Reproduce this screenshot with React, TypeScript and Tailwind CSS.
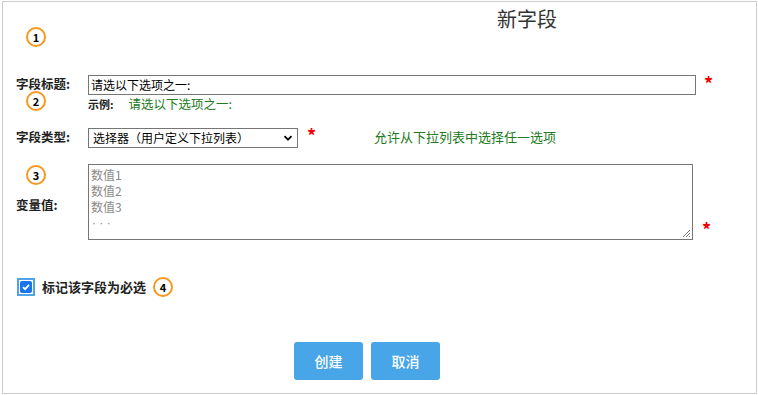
const font = { fontFamily: '"Noto Sans CJK SC", "Liberation Sans", sans-serif' }

const Badge = ({ n }: { n: number }) => (
  <span className="flex h-[20px] w-[20px] shrink-0 items-center justify-center rounded-full border-[2.5px] border-[#f7971f] bg-white text-[11px] font-bold leading-none text-black">
    {n}
  </span>
)

const Star = ({ className = "" }: { className?: string }) => (
  <span className={`block h-[12px] w-[9px] text-[18px] font-bold leading-[15px] text-[#f20000] ${className}`}>*</span>
)

export default function App() {
  return (
    <div className="bg-white w-[758px] h-[395px] pt-[1px] pl-[2px] leading-[16px]" style={font}>
      <div className="w-[755px] h-[393px] border border-[#cccccc] pl-[13px]">
        {/* header: badge 1 + title */}
        <div className="flex h-[45px] items-start">
          <div className="ml-[10px] mt-[25px]">
            <Badge n={1} />
          </div>
          <h1 className="ml-[451px] mt-[5px] text-[20px] font-normal leading-[24px] text-[#333333]">新字段</h1>
        </div>

        {/* field title */}
        <div className="mt-[28px] flex items-start">
          <div className="w-[72px]">
            <div className="mt-[1px] h-[15px] text-[12.5px] font-bold leading-[16px] text-[#222]">字段标题:</div>
            <div className="ml-[10px]">
              <Badge n={2} />
            </div>
          </div>
          <div>
            <div className="flex items-start">
              <div className="flex h-[20px] w-[608px] items-center border border-[#767676] px-[2px] text-[12px] leading-[16px] text-black">
                请选以下选项之一:
              </div>
              <Star className="ml-[8px] mt-[1px]" />
            </div>
            <div className="mt-[2px] flex items-center">
              <span className="text-[11px] font-bold leading-[14px] text-[#222]">示例:</span>
              <span className="ml-[15px] text-[12.5px] leading-[14px] text-[#217a21]">请选以下选项之一:</span>
            </div>
          </div>
        </div>

        {/* field type */}
        <div className="mt-[17px] flex items-start">
          <div className="w-[72px] text-[12.5px] font-bold leading-[18px] text-[#222]">字段类型:</div>
          <div className="flex h-[20px] w-[210px] items-center justify-between border border-[#767676] pl-[4px] pr-[4px] text-[12px] leading-[16px] text-black">
            <span>选择器（用户定义下拉列表）</span>
            <svg width="10" height="10" viewBox="0 0 10 10" fill="none">
              <path d="M1.5 3.2 5 6.7 8.5 3.2" stroke="#000" strokeWidth="1.8" />
            </svg>
          </div>
          <Star className="ml-[9px] mt-[0px]" />
          <span className="ml-[58px] text-[13px] leading-[18px] text-[#217a21]">允许从下拉列表中选择任一选项</span>
        </div>

        {/* values */}
        <div className="mt-[16px] flex items-end">
          <div className="w-[72px] self-start">
            <div className="ml-[10px] mt-[1px]">
              <Badge n={3} />
            </div>
            <div className="mt-[12px] text-[12.5px] font-bold leading-[16px] text-[#222]">变量值:</div>
          </div>
          <div className="relative h-[76px] w-[605px] border border-[#767676] px-[2px] pt-[2px] text-[12px] leading-[16px] text-[#8a8a8a]">
            <div>数值1</div>
            <div>数值2</div>
            <div>数值3</div>
            <div className="pl-[1px] text-[12px]" style={{ fontFamily: '"Liberation Sans", sans-serif' }}>· · ·</div>
            <svg className="absolute bottom-[1px] right-[1px]" width="9" height="9" viewBox="0 0 9 9">
              <path d="M8 1 1 8M8 4 4 8M8 7 7 8" stroke="#777" strokeWidth="1" />
            </svg>
          </div>
          <Star className="mb-[6px] ml-[9px]" />
        </div>

        {/* required checkbox */}
        <div className="mt-[37px] flex items-center">
          <span className="ml-[1px] flex h-[18px] w-[18px] items-center justify-center border-2 border-[#4fa3ea] bg-white">
            <span className="flex h-[12px] w-[12px] items-center justify-center rounded-[2px] bg-[#1a73e8]">
              <svg width="10" height="10" viewBox="0 0 10 10" fill="none">
                <path d="M2 5.2 4.1 7.2 8 2.8" stroke="#fff" strokeWidth="1.8" />
              </svg>
            </span>
          </span>
          <span className="ml-[7px] text-[13px] font-bold leading-[18px] text-[#222]">标记该字段为必选</span>
          <span className="ml-[7px]">
            <Badge n={4} />
          </span>
        </div>

        {/* actions */}
        <div className="mt-[45px] ml-[278px] flex gap-[8px]">
          <button className="h-[38px] w-[69px] rounded-[3px] bg-[#48a6e8] text-[14px] font-medium text-white">创建</button>
          <button className="h-[38px] w-[69px] rounded-[3px] bg-[#48a6e8] text-[14px] font-medium text-white">取消</button>
        </div>
      </div>
    </div>
  )
}
